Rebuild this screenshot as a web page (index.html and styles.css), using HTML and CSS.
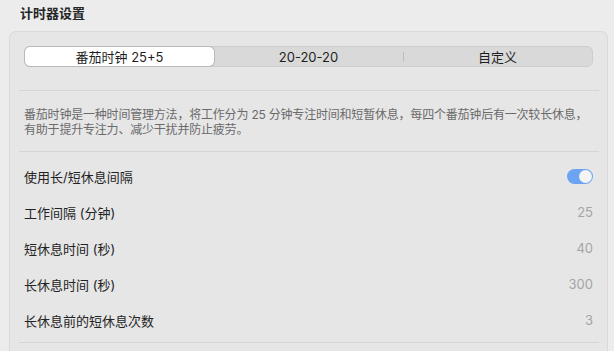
FILE: index.html
```html
<!DOCTYPE html>
<html lang="zh">
<head>
<meta charset="utf-8">
<link rel="stylesheet" href="styles.css">
</head>
<body>
<div class="title">计时器设置</div>
<div class="card">
  <div class="segmented">
    <div class="seg active">番茄时钟 25+5</div>
    <div class="seg">20-20-20</div>
    <div class="seg sep">自定义</div>
  </div>
  <div class="divider"></div>
  <p class="desc">番茄时钟是一种时间管理方法，将工作分为 25 分钟专注时间和短暂休息，每四个番茄钟后有一次较长休息，有助于提升专注力、减少干扰并防止疲劳。</p>
  <div class="divider"></div>
  <div class="rows">
    <div class="row"><span class="label">使用长/短休息间隔</span><span class="toggle"><span class="knob"></span></span></div>
    <div class="row"><span class="label">工作间隔 (分钟)</span><span class="value">25</span></div>
    <div class="row"><span class="label">短休息时间 (秒)</span><span class="value">40</span></div>
    <div class="row"><span class="label">长休息时间 (秒)</span><span class="value">300</span></div>
    <div class="row"><span class="label">长休息前的短休息次数</span><span class="value">3</span></div>
  </div>
  <div class="divider"></div>
</div>
</body>
</html>
```

FILE: styles.css
```css
html, body {
  margin: 0;
  padding: 0;
  height: 351px;
  background: #ececec;
  font-family: "Inter", "Noto Sans CJK SC", sans-serif;
  overflow: hidden;
}
.title {
  padding: 5px 0 0 20px;
  font-size: 13px;
  line-height: 16px;
  font-weight: 700;
  color: #262626;
}
.card {
  margin: 10px 6px 0 9px;
  border: 1px solid #d9d9d9;
  border-bottom: none;
  border-radius: 7px 7px 0 0;
  background: #e6e6e6;
  padding-top: 14px;
  padding-bottom: 8px;
}
.segmented {
  margin: 0 14px;
  height: 19px;
  border: 1px solid #cdcdcd;
  border-radius: 6px;
  background: #d9d9d9;
  display: flex;
}
.seg {
  flex: 1;
  display: flex;
  align-items: center;
  justify-content: center;
  font-size: 13px;
  color: #1f1f1f;
  position: relative;
}
.seg.active {
  background: #ffffff;
  border-radius: 5px;
  box-shadow: 0 0 0 1px #b9b9b9;
}
.seg.sep::before {
  content: "";
  position: absolute;
  left: 0;
  top: 5px;
  height: 10px;
  border-left: 1px solid #bdbdbd;
}
.divider {
  margin: 0 8px 0 9px;
  border-top: 1px solid #d6d6d6;
}
.segmented + .divider {
  margin-top: 23px;
}
.desc {
  margin: 0;
  padding: 16px 14px 14px 14px;
  font-size: 12px;
  line-height: 15px;
  letter-spacing: -0.2px;
  color: #6a6a6a;
}
.rows {
  padding: 6px 14px 4px 14px;
}
.row {
  height: 36px;
  display: flex;
  align-items: center;
  justify-content: space-between;
  font-size: 13px;
  color: #232323;
}
.value {
  color: #a5a5a5;
}
.toggle {
  width: 26px;
  height: 15px;
  border-radius: 8px;
  background: #6ca4f3;
  display: flex;
  align-items: center;
  justify-content: flex-end;
  padding: 0 1px;
  box-sizing: border-box;
}
.knob {
  width: 13px;
  height: 13px;
  border-radius: 50%;
  background: #f4f4f4;
}
```
